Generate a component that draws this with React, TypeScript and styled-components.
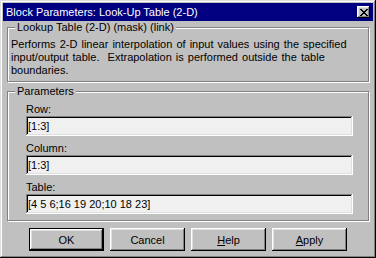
import React from "react";
import styled, { createGlobalStyle } from "styled-components";

const GlobalStyle = createGlobalStyle`
  html, body {
    margin: 0;
    padding: 0;
    background: #c0c0c0;
  }
  body {
    font-family: "Liberation Sans", Arial, sans-serif;
    font-size: 11px;
    color: #000;
  }
`;

const raised = `
  box-shadow: inset -1px -1px #000, inset 1px 1px #fff, inset -2px -2px #808080,
    inset 2px 2px #dfdfdf;
`;

const Window = styled.div`
  box-sizing: border-box;
  width: 376px;
  height: 258px;
  padding: 3px;
  background: #c0c0c0;
  box-shadow: inset -1px -1px #000, inset 1px 1px #dfdfdf, inset -2px -2px #808080,
    inset 2px 2px #fff;
  display: flex;
  flex-direction: column;
`;

const TitleBar = styled.div`
  height: 18px;
  flex: none;
  background: #000080;
  color: #fff;
  display: flex;
  align-items: center;
  justify-content: space-between;
  padding: 0 3px 0 3px;
`;

const TitleText = styled.span`
  font-size: 11px;
  line-height: 18px;
  white-space: nowrap;
`;

const CloseButton = styled.button`
  width: 13px;
  height: 12px;
  padding: 0;
  border: none;
  background: #c0c0c0;
  ${raised};
  display: flex;
  align-items: center;
  justify-content: center;
`;

const Body = styled.div`
  flex: 1;
  display: flex;
  flex-direction: column;
  padding: 0 4px;
`;

const Group = styled.fieldset`
  margin: 0;
  padding: 0;
  border: 1px solid #808080;
  box-shadow: inset 1px 1px #fff, 1px 1px #fff;
  min-width: 0;

  & + & {
    margin-top: 3px;
  }
`;

const Legend = styled.legend`
  margin-left: 7px;
  padding: 0 2px;
  line-height: 13px;
  background: #c0c0c0;
`;

const GroupContent = styled.div<{ $pad: string }>`
  padding: ${(p) => p.$pad};
`;

const Description = styled.p`
  margin: 0;
  line-height: 13px;
  word-spacing: 1px;
`;

const Fields = styled.div`
  display: flex;
  flex-direction: column;
  gap: 5px;
`;

const Field = styled.label`
  display: flex;
  flex-direction: column;
`;

const FieldLabel = styled.span`
  line-height: 14px;
`;

const TextBox = styled.input`
  box-sizing: border-box;
  width: 100%;
  height: 20px;
  margin: 0;
  padding: 0 2px;
  border: none;
  outline: none;
  background: #f0f0f0;
  font: inherit;
  color: #000;
  box-shadow: inset -1px -1px #fff, inset 1px 1px #808080, inset -2px -2px #dfdfdf,
    inset 2px 2px #000;
`;

const ButtonRow = styled.div`
  display: flex;
  justify-content: center;
  gap: 6px;
  margin-top: 7px;
`;

const Button = styled.button<{ $default?: boolean }>`
  box-sizing: border-box;
  width: 75px;
  height: 23px;
  padding: 0;
  background: #c0c0c0;
  font: inherit;
  color: #000;
  border: ${(p) => (p.$default ? "1px solid #000" : "none")};
  ${raised};
`;

const CloseGlyph = () => (
  <svg width="8" height="7" viewBox="0 0 8 7" shapeRendering="crispEdges">
    <path
      fill="#000"
      d="M0 0h2v1H0zM6 0h2v1H6zM1 1h2v1H1zM5 1h2v1H5zM2 2h4v1H2zM3 3h2v1H3zM2 4h4v1H2zM1 5h2v1H1zM5 5h2v1H5zM0 6h2v1H0zM6 6h2v1H6z"
    />
  </svg>
);

const params = [
  { label: "Row:", value: "[1:3]" },
  { label: "Column:", value: "[1:3]" },
  { label: "Table:", value: "[4 5 6;16 19 20;10 18 23]" },
];

export default function App() {
  return (
    <>
      <GlobalStyle />
      <Window>
        <TitleBar>
          <TitleText>Block Parameters: Look-Up Table (2-D)</TitleText>
          <CloseButton aria-label="Close">
            <CloseGlyph />
          </CloseButton>
        </TitleBar>
        <Body>
          <Group>
            <Legend>Lookup Table (2-D) (mask) (link)</Legend>
            <GroupContent $pad="4px 3px 4px 3px">
              <Description>
                Performs 2-D linear interpolation of input values using the specified
                input/output table.&nbsp; Extrapolation is performed outside the table
                boundaries.
              </Description>
            </GroupContent>
          </Group>
          <Group>
            <Legend>Parameters</Legend>
            <GroupContent $pad="4px 15px 6px 18px">
              <Fields>
                {params.map((f) => (
                  <Field key={f.label}>
                    <FieldLabel>{f.label}</FieldLabel>
                    <TextBox defaultValue={f.value} />
                  </Field>
                ))}
              </Fields>
            </GroupContent>
          </Group>
          <ButtonRow>
            <Button $default>OK</Button>
            <Button>Cancel</Button>
            <Button>
              <u>H</u>elp
            </Button>
            <Button>
              <u>A</u>pply
            </Button>
          </ButtonRow>
        </Body>
      </Window>
    </>
  );
}
